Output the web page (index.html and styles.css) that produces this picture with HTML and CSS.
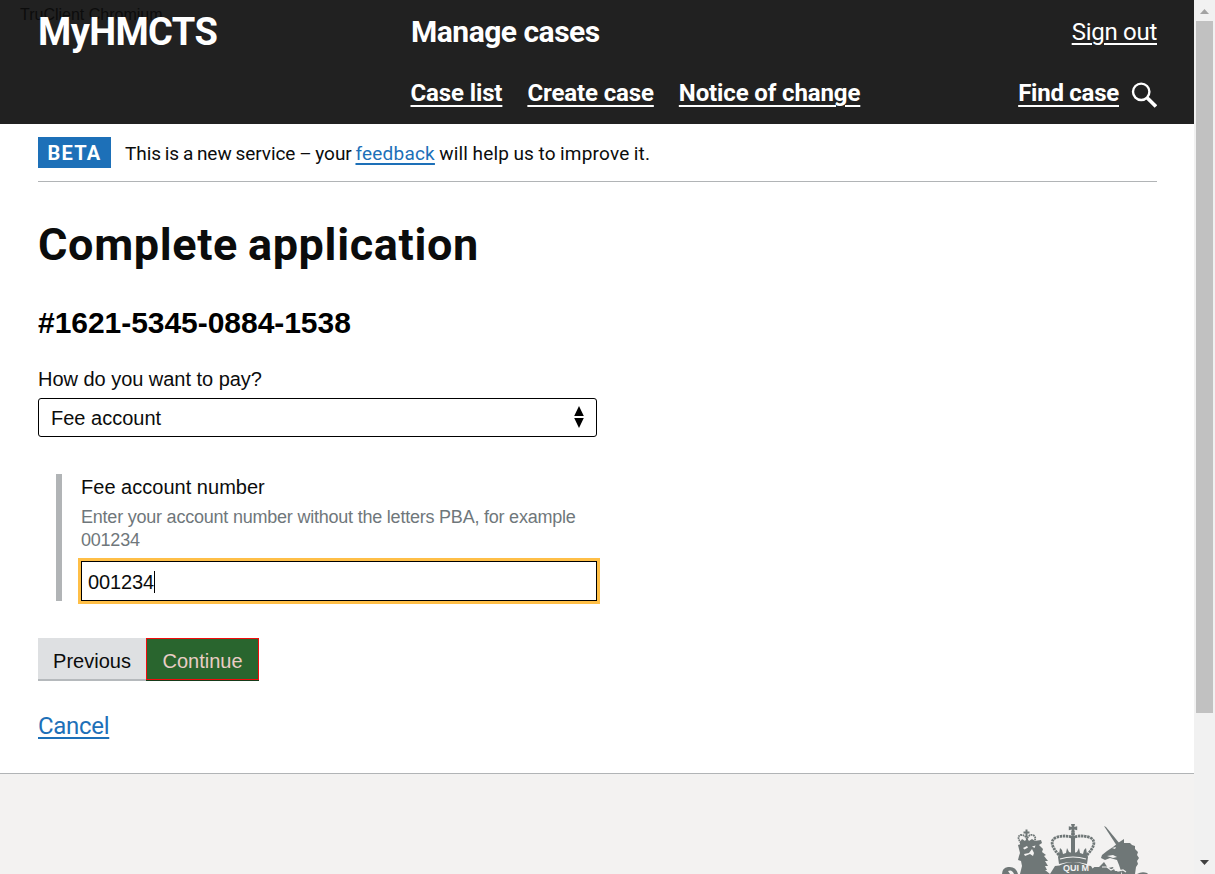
FILE: index.html
```html
<!DOCTYPE html>
<html lang="en">
<head>
<meta charset="utf-8">
<title>Manage cases</title>
<link rel="stylesheet" href="styles.css">
</head>
<body>
<div class="page">
  <header class="header">
    <span class="overlay">TruClient Chromium</span>
    <div class="row row-top">
      <a class="brand"><span>MyHMCTS</span></a>
      <span class="service">Manage cases</span>
      <a class="signout">Sign out</a>
    </div>
    <div class="row row-nav">
      <nav class="nav"><a>Case list</a><a>Create case</a><a>Notice of change</a></nav>
      <div class="find"><a>Find case</a>
        <svg width="26" height="26" viewBox="0 0 26 26" fill="none" stroke="#fff"><circle cx="10.2" cy="9.8" r="8.2" stroke-width="2.4"/><path d="M16.1 15.700L24.900 24.500" stroke-width="3.6"/></svg>
      </div>
    </div>
  </header>
  <div class="phase"><strong class="tag">BETA</strong><p>This is a new service – your <a>feedback</a><span class="tail"> will help us to improve it.</span></p></div>
  <main class="main">
    <h1>Complete application</h1>
    <h2>#1621-5345-0884-1538</h2>
    <label class="label question">How do you want to pay?</label>
    <div class="select"><span>Fee account</span>
      <svg width="10" height="24" viewBox="0 0 10 24"><path d="M5 1L9.8 11H.2zM5 23L.2 13h9.600z" fill="#000"/></svg>
    </div>
    <div class="panel">
      <label class="label">Fee account number</label>
      <p class="hint">Enter your account number without the letters PBA, for example 001234</p>
      <div class="input"><span>001234</span><i class="caret"></i></div>
    </div>
    <div class="buttons"><button class="btn prev">Previous</button><button class="btn cont">Continue</button></div>
    <a class="cancel">Cancel</a>
  </main>
  <footer class="footer">
    <svg class="crest" width="170" height="60" viewBox="0 0 170 60" fill="#6f7777">
      <g>
        <path d="M35.500 15.500h2v2h2v2h-2v4h-2v-4h-2v-2h2z"/>
        <path d="M31 29Q26 22 31 21q4 0 6 4 2-5 6-4 4 2 1 7" fill="none" stroke="#6f7777" stroke-width="1.8" stroke-dasharray="1.700 .6"/>
        <path d="M30 28l2-3 3 2 2-3 2 3 3-2 3 2v2l-15 2z"/>
        <path d="M28 31q9-3 23-5l1 3-3 2 4 4-1 3 4 3-2 1 4 5-3 0 3 5-3 0 2 4-2 0 5 4H30l2-8-1-5-3-1 1-4 1-3z"/>
        <path d="M33 34l4-2 1 1.500-3.500 2zM42 32.500l3.500-1-1 2.500zM34 40l5-1 3-4 2 4-1 3-3-2-5 2z" fill="#f3f2f1"/>
        <path d="M12 60q0-6 6-7 8-1 10 7h-4q-2-5-6-3l2 3z"/>
      </g>
      <g>
        <path d="M81 10h4l-.8 3 3-.8v4l-3-.8.8 3h-4l.8-3-3 .8v-4l3 .8z"/>
        <circle cx="83" cy="20" r="2"/>
        <path d="M69 41Q57 28 66 23.500q9-3 17 0 8-3 17 0Q109 28 97 41" fill="none" stroke="#6f7777" stroke-width="2.800" stroke-dasharray="2.400 .7"/>
        <path d="M81 22h4v17h-4z"/>
        <path d="M68 43l1-3 1-6 2 2 1 4 3-1 1-5 2 4 3 1 1-2 1 2 3-1 2-4 1 5 3 1 1-4 2-2 1 6 1 3-1 7q-14-4-28 0z"/>
        <path d="M70 45q13-4 26 0" fill="none" stroke="#f3f2f1" stroke-width="1.2"/>
        <path d="M60 60l5-8q5 0 8-2 10-4 20 0 4 2 8 2l5 8z"/>
        <text class="motto" x="73" y="57">QUI M</text>
      </g>
      <g>
        <path d="M114 12l2 1 14 17-3 2z"/>
        <path d="M128 29l6-4 0 4 6 0 2 2 3 1 0 3 3 3-1 3 2 3-2 3 1 3-2 3-1 7h-13l-3-9-2-5-7-2-5 2-4-2 1-3 5-4 6-4z"/>
        <path d="M122 34l4-1-1 2zM117 42l6-1 4 2-4 1z" fill="#f3f2f1"/>
        <path d="M104 53l5 0 5-5 4 6 5-1 2 4 6 0v3h-24z"/>
        <path d="M112 53l5 0 4 3 4-2 3 3 5-1 3 2" fill="none" stroke="#f3f2f1" stroke-width="1.2"/>
        <path d="M102 55q5-6 10 5h-8zM147 60q5-3 10-1l1 1z"/>
      </g>
    </svg>
  </footer>
</div>
<div class="scrollbar">
  <svg width="21" height="21" viewBox="0 0 21 21"><path d="M6 14l4.500-5 4.500 5z" fill="#a3a3a3"/></svg>
  <div class="thumb"></div>
  <svg width="21" height="21" viewBox="0 0 21 21"><path d="M6 7l4.500 5L15 7z" fill="#404040"/></svg>
</div>
</body>
</html>
```
FILE: styles.css
```css
* { box-sizing: border-box; }
body { margin: 0; width: 1215px; height: 874px; overflow: hidden; display: flex; background: #fff; color: #0b0c0c; font-family: Roboto, sans-serif; }
.page { width: 1194px; height: 874px; overflow: hidden; display: flex; flex-direction: column; }
.header { position: relative; background: #212121; color: #fff; height: 124px; padding: 0 37px 0 38px; flex: none; }
.overlay { position: absolute; left: 20px; top: 5px; font: 16px/20px "Liberation Sans", Arial, sans-serif; color: #0c0c0c; white-space: nowrap; }
.row { position: relative; display: flex; }
.row-top { height: 62px; line-height: 64px; }
.brand { width: 373px; font-size: 38px; font-weight: 700; letter-spacing: -.6px; }
.service { font-size: 30px; font-weight: 700; flex: 1; letter-spacing: -.5px; }
.signout { font-size: 24px; letter-spacing: -.28px; text-decoration: underline; text-decoration-thickness: 2px; text-underline-offset: 3px; }
.row-nav { height: 62px; line-height: 62px; justify-content: space-between; padding-left: 372.500px; font-size: 24px; font-weight: 700; letter-spacing: -.12px; }
.nav { display: flex; gap: 25px; }
.row-nav a { text-decoration: underline; text-decoration-thickness: 2px; text-underline-offset: 4px; white-space: nowrap; }
.find { display: flex; gap: 12px; letter-spacing: -.25px; }
.find svg { margin-top: 20px; }
.phase { height: 58px; flex: none; margin: 0 37px 0 38px; border-bottom: 1px solid #b1b4b6; display: flex; align-items: center; gap: 14px; }
.tag { background: #1d70b8; color: #fff; height: 31px; width: 73px; text-align: center; font-size: 20px; line-height: 33px; letter-spacing: 1.2px; }
.phase p { margin: 0; padding-top: 2px; font-size: 19px; line-height: 30px; white-space: nowrap; letter-spacing: -.05px; word-spacing: -.9px; }
.phase .tail { letter-spacing: .2px; word-spacing: -.6px; }
.phase a, .cancel { color: #1d70b8; text-decoration: underline; text-decoration-thickness: 2px; text-underline-offset: 3px; }
.phase a { letter-spacing: .2px; }
.main { height: 591px; flex: none; padding: 36px 38px 0; font-family: "Liberation Sans", Arial, sans-serif; }
h1 { margin: 0 0 35px; font: 700 45px/54px Roboto, sans-serif; letter-spacing: .65px; word-spacing: -2px; }
h2 { margin: 0 0 27px; font-size: 30px; line-height: 32px; color: #000; letter-spacing: -.04px; }
.label { display: block; font-size: 20px; line-height: 26px; letter-spacing: .02px; }
.question { letter-spacing: -.03px; }
.select { width: 559px; height: 39px; margin-top: 6px; border: 1px solid #000; border-radius: 3px; padding: 0 12px; display: flex; justify-content: space-between; align-items: center; font-size: 20px; }
.select span { padding-top: 2px; }
.select svg { margin-bottom: 2px; }
.panel { width: 541px; height: 127px; margin: 37px 0 0 18px; border-left: 6px solid #b1b4b6; padding-left: 19px; }
.hint { margin: 6px 0 9px; font-size: 18px; line-height: 23px; color: #6f777b; width: 516px; letter-spacing: -.22px; }
.input { width: 516px; height: 40px; border: 1px solid #000; outline: 3px solid #ffbf47; display: flex; align-items: center; padding: 2px 0 0 6px; font-size: 20px; letter-spacing: -.1px; }
.caret { width: 1px; height: 22px; background: #000; }
.buttons { display: flex; margin-top: 37px; }
.btn { height: 43px; border: 0; padding: 0; font: 20px/43px "Liberation Sans", Arial, sans-serif; }
.prev { width: 108px; padding-top: 2px; background: #dee0e2; color: #0b0c0c; box-shadow: inset 0 -2px #b5b9bc; }
.cont { width: 113px; padding-top: 1px; background: #29652e; color: #e9cdc5; border: 1px solid #f00c0c; box-shadow: 0 1px #173a1a; height: 42px; line-height: 43px; }
.cancel { display: inline-block; margin-top: 29px; font: 24px/32px Roboto, sans-serif; letter-spacing: -.3px; }
.footer { flex: 1; border-top: 1px solid #b1b4b6; background: #f3f2f1; padding: 40px 34px 0; display: flex; justify-content: flex-end; }
.motto { font: 700 9px "Liberation Sans", Arial, sans-serif; fill: #f3f2f1; }
.scrollbar { width: 21px; height: 874px; background: #f1f1f1; display: flex; flex-direction: column; }
.thumb { width: 17px; height: 692px; margin: 0 2px 140px; background: #c1c1c1; flex: none; }
```
